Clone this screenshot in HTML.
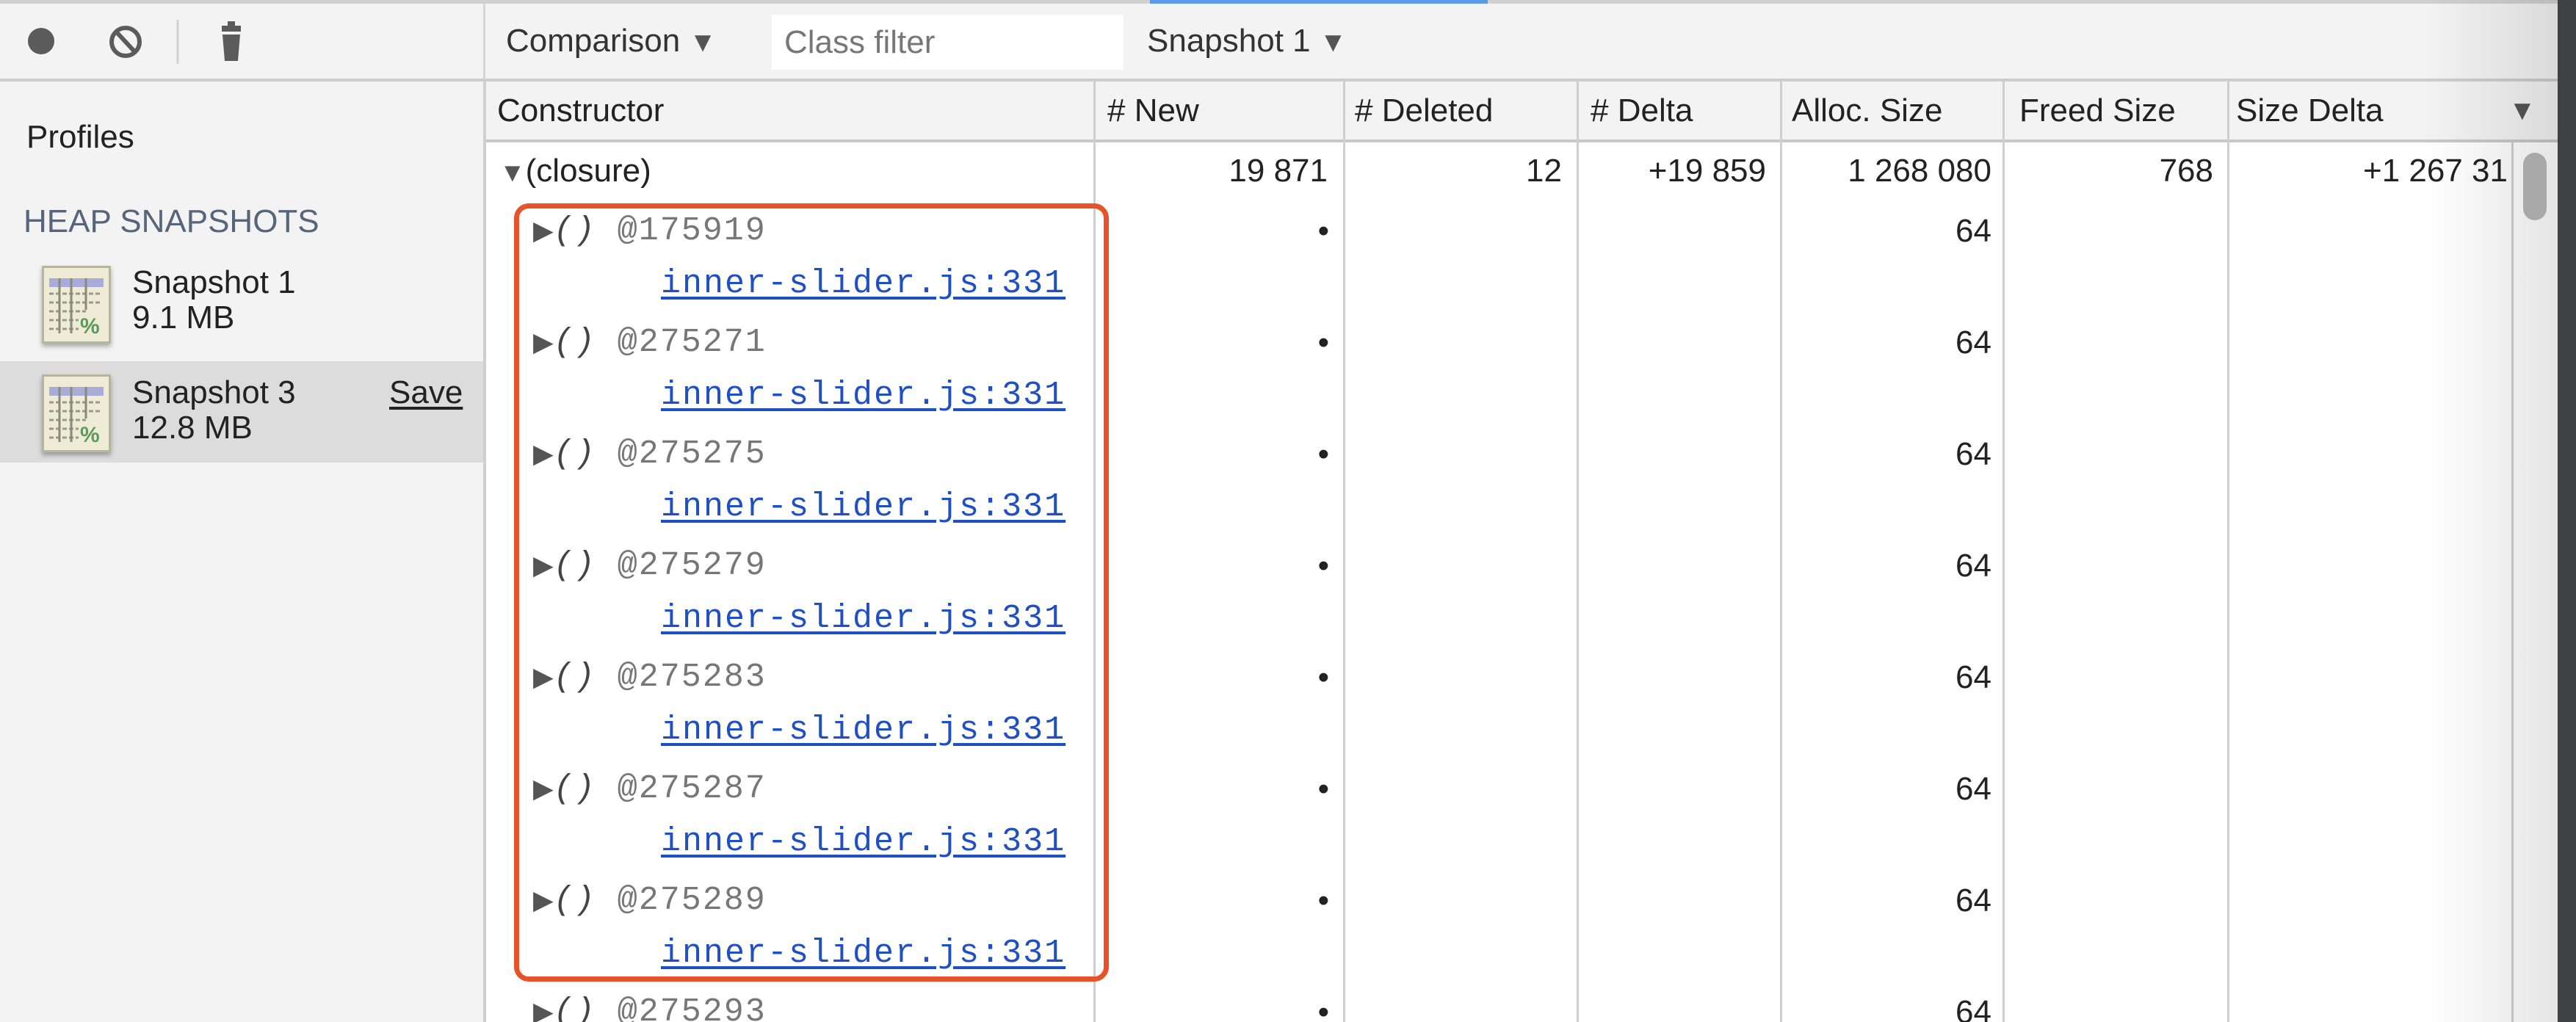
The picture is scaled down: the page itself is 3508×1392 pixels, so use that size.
<!DOCTYPE html>
<html style="overflow:hidden;width:3508px;height:1392px"><head><meta charset="utf-8"><style>
*{margin:0;padding:0;box-sizing:border-box}
body{width:3508px;height:1392px;overflow:hidden;background:#fff;font-family:"Liberation Sans",Arial,sans-serif;color:#222;position:relative}
.a{position:absolute;white-space:nowrap}
.t{font-size:44px;line-height:50px}
.m{font-family:"Liberation Mono",monospace;font-size:45px;line-height:50px;letter-spacing:2px}
.vl{position:absolute;top:110px;width:3px;height:1282px;background:#cfcfcf}
.r{text-align:right}
.lk{color:#1f4fc4;text-decoration:underline;text-underline-offset:6px}
.ic{position:absolute;width:94px;height:106px;background:#eeecd6;border:3px solid #b7b59c;box-shadow:0 4px 6px rgba(0,0,0,.3)}
.tr{font-size:36px;color:#555;letter-spacing:0}
.dd{font-size:38px;color:#555;margin-left:12px}
</style></head><body>
<div class="a" style="left:0;top:0;width:3508px;height:5px;background:#d0d0d0"></div>
<div class="a" style="left:1566px;top:0;width:460px;height:5px;background:#5a9ae6"></div>
<div class="a" style="left:0;top:5px;width:3508px;height:103px;background:#f3f3f3"></div>
<div class="a" style="left:0;top:107px;width:3508px;height:4px;background:#cdcdcd"></div>
<svg class="a" style="left:0;top:5px" width="660" height="103">
<circle cx="56" cy="51" r="18" fill="#5b5b5b"/>
<circle cx="171" cy="52" r="19" fill="none" stroke="#5b5b5b" stroke-width="6"/>
<line x1="158" y1="38" x2="184" y2="66" stroke="#5b5b5b" stroke-width="6"/>
<line x1="242" y1="22" x2="242" y2="82" stroke="#d0d0d0" stroke-width="3"/>
<rect x="302" y="30" width="26" height="8" fill="#5b5b5b"/><rect x="310" y="24" width="10" height="8" fill="#5b5b5b"/>
<path d="M303 42 H327 L324 78 H306 Z" fill="#5b5b5b"/>
</svg>
<div class="a" style="left:658px;top:5px;width:3px;height:103px;background:#d6d6d6"></div>
<div class="a t" style="left:689px;top:31px;color:#333">Comparison<span class="dd">▼</span></div>
<div class="a" style="left:1051px;top:20px;width:479px;height:75px;background:#fff"></div>
<div class="a t" style="left:1068px;top:33px;color:#777">Class filter</div>
<div class="a t" style="left:1562px;top:31px;color:#333">Snapshot 1<span class="dd">▼</span></div>
<div class="a" style="left:0;top:111px;width:658px;height:1281px;background:#f3f3f3"></div>
<div class="a" style="left:658px;top:111px;width:4px;height:1281px;background:#cfcfcf"></div>
<div class="a t" style="left:36px;top:162px">Profiles</div>
<div class="a t" style="left:32px;top:277px;color:#56657a">HEAP SNAPSHOTS</div>
<div class="a" style="left:0;top:492px;width:658px;height:138px;background:#dcdcdc"></div>
<div class="ic" style="left:57px;top:362px"></div>
<div class="ic" style="left:57px;top:510px"></div>
<svg class="a" style="left:57px;top:362px" width="94" height="260">
<g><rect x="10" y="17" width="74" height="12" fill="#a9acd9"/>
<g stroke="#9a9a8a" stroke-width="3" stroke-dasharray="6 3"><line x1="10" y1="38" x2="80" y2="38"/><line x1="10" y1="50" x2="80" y2="50"/><line x1="10" y1="62" x2="60" y2="62"/><line x1="10" y1="74" x2="50" y2="74"/><line x1="10" y1="86" x2="50" y2="86"/></g>
<g stroke="#8a8a7a" stroke-width="3"><line x1="24" y1="17" x2="24" y2="92"/><line x1="40" y1="17" x2="40" y2="92"/><line x1="60" y1="17" x2="60" y2="60"/></g>
<text x="52" y="92" font-size="30" font-weight="bold" fill="#5b9a5b" font-family="Liberation Sans">%</text></g>
<g transform="translate(0,148)"><rect x="10" y="17" width="74" height="12" fill="#a9acd9"/>
<g stroke="#9a9a8a" stroke-width="3" stroke-dasharray="6 3"><line x1="10" y1="38" x2="80" y2="38"/><line x1="10" y1="50" x2="80" y2="50"/><line x1="10" y1="62" x2="60" y2="62"/><line x1="10" y1="74" x2="50" y2="74"/><line x1="10" y1="86" x2="50" y2="86"/></g>
<g stroke="#8a8a7a" stroke-width="3"><line x1="24" y1="17" x2="24" y2="92"/><line x1="40" y1="17" x2="40" y2="92"/><line x1="60" y1="17" x2="60" y2="60"/></g>
<text x="52" y="92" font-size="30" font-weight="bold" fill="#5b9a5b" font-family="Liberation Sans">%</text></g>
</svg>
<div class="a t" style="left:180px;top:360px">Snapshot 1</div>
<div class="a t" style="left:180px;top:408px">9.1 MB</div>
<div class="a t" style="left:180px;top:510px">Snapshot 3</div>
<div class="a t" style="left:180px;top:558px">12.8 MB</div>
<div class="a t" style="left:530px;top:510px;text-decoration:underline;text-underline-offset:5px">Save</div>
<div class="a" style="left:662px;top:111px;width:2821px;height:80px;background:#f3f3f3"></div>
<div class="a" style="left:662px;top:190px;width:2821px;height:4px;background:#c8c8c8"></div>
<div class="vl" style="left:1489px"></div><div class="vl" style="left:1829px"></div><div class="vl" style="left:2147px"></div><div class="vl" style="left:2424px"></div><div class="vl" style="left:2727px"></div><div class="vl" style="left:3033px"></div>
<div class="vl" style="left:3420px;top:194px;height:1198px"></div>
<div class="a t" style="left:677px;top:126px">Constructor</div>
<div class="a t" style="left:1508px;top:126px"># New</div>
<div class="a t" style="left:1845px;top:126px"># Deleted</div>
<div class="a t" style="left:2166px;top:126px"># Delta</div>
<div class="a t" style="left:2440px;top:126px">Alloc. Size</div>
<div class="a t" style="left:2750px;top:126px">Freed Size</div>
<div class="a t" style="left:3045px;top:126px">Size Delta</div>
<div class="a" style="left:3416px;top:130px;font-size:38px;color:#555">▼</div>
<div class="a t" style="left:680px;top:208px"><span class="tr">▼</span>(closure)</div>
<div class="a t r" style="left:1500px;width:308px;top:208px">19 871</div>
<div class="a t r" style="left:1840px;width:287px;top:208px">12</div>
<div class="a t r" style="left:2160px;width:245px;top:208px">+19 859</div>
<div class="a t r" style="left:2430px;width:282px;top:208px">1 268 080</div>
<div class="a t r" style="left:2740px;width:274px;top:208px">768</div>
<div class="a t" style="left:3218px;top:208px;width:195px;overflow:hidden">+1 267 31</div>
<div class="a" style="left:700px;top:277px;width:810px;height:1060px;border:7px solid #e8522a;border-radius:20px"></div>
<div class="a m" style="left:726px;top:290px;color:#777"><span class="tr">▶</span><i style="color:#444">()</i> @175919</div>
<div class="a m lk" style="left:900px;top:362px">inner-slider.js:331</div>
<div class="a m" style="left:726px;top:442px;color:#777"><span class="tr">▶</span><i style="color:#444">()</i> @275271</div>
<div class="a m lk" style="left:900px;top:514px">inner-slider.js:331</div>
<div class="a m" style="left:726px;top:594px;color:#777"><span class="tr">▶</span><i style="color:#444">()</i> @275275</div>
<div class="a m lk" style="left:900px;top:666px">inner-slider.js:331</div>
<div class="a m" style="left:726px;top:746px;color:#777"><span class="tr">▶</span><i style="color:#444">()</i> @275279</div>
<div class="a m lk" style="left:900px;top:818px">inner-slider.js:331</div>
<div class="a m" style="left:726px;top:898px;color:#777"><span class="tr">▶</span><i style="color:#444">()</i> @275283</div>
<div class="a m lk" style="left:900px;top:970px">inner-slider.js:331</div>
<div class="a m" style="left:726px;top:1050px;color:#777"><span class="tr">▶</span><i style="color:#444">()</i> @275287</div>
<div class="a m lk" style="left:900px;top:1122px">inner-slider.js:331</div>
<div class="a m" style="left:726px;top:1202px;color:#777"><span class="tr">▶</span><i style="color:#444">()</i> @275289</div>
<div class="a m lk" style="left:900px;top:1274px">inner-slider.js:331</div>
<div class="a m" style="left:726px;top:1354px;color:#777"><span class="tr">▶</span><i style="color:#444">()</i> @275293</div>
<div class="a t r" style="left:1700px;width:110px;top:290px">•</div><div class="a t r" style="left:2600px;width:112px;top:290px">64</div>
<div class="a t r" style="left:1700px;width:110px;top:442px">•</div><div class="a t r" style="left:2600px;width:112px;top:442px">64</div>
<div class="a t r" style="left:1700px;width:110px;top:594px">•</div><div class="a t r" style="left:2600px;width:112px;top:594px">64</div>
<div class="a t r" style="left:1700px;width:110px;top:746px">•</div><div class="a t r" style="left:2600px;width:112px;top:746px">64</div>
<div class="a t r" style="left:1700px;width:110px;top:898px">•</div><div class="a t r" style="left:2600px;width:112px;top:898px">64</div>
<div class="a t r" style="left:1700px;width:110px;top:1050px">•</div><div class="a t r" style="left:2600px;width:112px;top:1050px">64</div>
<div class="a t r" style="left:1700px;width:110px;top:1202px">•</div><div class="a t r" style="left:2600px;width:112px;top:1202px">64</div>
<div class="a t r" style="left:1700px;width:110px;top:1354px">•</div><div class="a t r" style="left:2600px;width:112px;top:1354px">64</div>
<div class="a" style="left:3300px;top:0;width:183px;height:1392px;background:linear-gradient(to right,rgba(0,0,0,0),rgba(0,0,0,.1))"></div>
<div class="a" style="left:3436px;top:208px;width:32px;height:92px;border-radius:16px;background:#a9a9a9"></div>
<div class="a" style="left:3483px;top:0;width:25px;height:1392px;background:#3f4142"></div>
</body></html>
